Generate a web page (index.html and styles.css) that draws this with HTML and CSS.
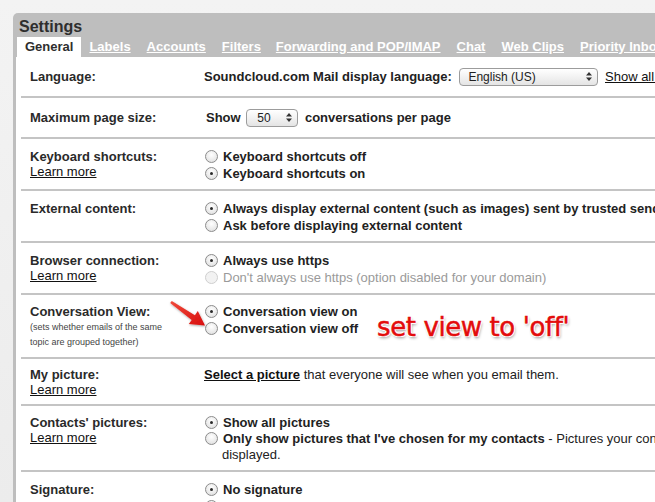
FILE: index.html
```html
<!DOCTYPE html>
<html>
<head>
<meta charset="utf-8">
<link rel="stylesheet" href="styles.css">
</head>
<body>
<div class="panel">
  <div class="panel-head">
    <h1 class="title">Settings</h1>
    <div class="tabs">
      <span class="tab active">General</span>
      <a class="tab">Labels</a>
      <a class="tab">Accounts</a>
      <a class="tab">Filters</a>
      <a class="tab">Forwarding and POP/IMAP</a>
      <a class="tab">Chat</a>
      <a class="tab">Web Clips</a>
      <a class="tab">Priority Inbox</a>
    </div>
  </div>
  <div class="content">
    <div class="row tall">
      <div class="label"><b>Language:</b></div>
      <div class="value"><b>Soundcloud.com Mail display language:</b> <span class="select lang"><span class="sel-text">English (US)</span><svg class="updown" width="6" height="9" viewBox="0 0 6 9"><path d="M3 0 L6 3.5 L0 3.5 Z M3 9 L6 5.5 L0 5.5 Z" fill="#333"/></svg></span> <a class="link">Show all language options</a></div>
    </div>
    <div class="row tall">
      <div class="label"><b>Maximum page size:</b></div>
      <div class="value"><b class="show">Show</b> <span class="select size"><span class="sel-text">50</span><svg class="updown" width="6" height="9" viewBox="0 0 6 9"><path d="M3 0 L6 3.5 L0 3.5 Z M3 9 L6 5.5 L0 5.5 Z" fill="#333"/></svg></span> <b>conversations per page</b></div>
    </div>
    <div class="row two">
      <div class="label"><b>Keyboard shortcuts:</b><div class="more"><a class="link">Learn more</a></div></div>
      <div class="value">
        <div class="opt"><span class="radio"></span><b>Keyboard shortcuts off</b></div>
        <div class="opt"><span class="radio on"></span><b>Keyboard shortcuts on</b></div>
      </div>
    </div>
    <div class="row two">
      <div class="label"><b>External content:</b></div>
      <div class="value">
        <div class="opt"><span class="radio on"></span><b>Always display external content (such as images) sent by trusted senders</b></div>
        <div class="opt"><span class="radio"></span><b>Ask before displaying external content</b></div>
      </div>
    </div>
    <div class="row two">
      <div class="label"><b>Browser connection:</b><div class="more"><a class="link">Learn more</a></div></div>
      <div class="value">
        <div class="opt"><span class="radio on"></span><b>Always use https</b></div>
        <div class="opt disabled"><span class="radio off"></span>Don't always use https (option disabled for your domain)</div>
      </div>
    </div>
    <div class="row conv">
      <div class="label"><b>Conversation View:</b><div class="note">(sets whether emails of the same<br>topic are grouped together)</div></div>
      <div class="value">
        <div class="opt"><span class="radio on"></span><b>Conversation view on</b></div>
        <div class="opt"><span class="radio"></span><b>Conversation view off</b></div>
      </div>
    </div>
    <div class="row pic">
      <div class="label"><b>My picture:</b><div class="more"><a class="link">Learn more</a></div></div>
      <div class="value"><a class="link"><b>Select a picture</b></a> that everyone will see when you email them.</div>
    </div>
    <div class="row three">
      <div class="label"><b>Contacts' pictures:</b><div class="more"><a class="link">Learn more</a></div></div>
      <div class="value">
        <div class="opt"><span class="radio on"></span><b>Show all pictures</b></div>
        <div class="opt"><span class="radio"></span><b>Only show pictures that I've chosen for my contacts</b> - Pictures your contacts choose will not be</div>
        <div class="opt-cont">displayed.</div>
      </div>
    </div>
    <div class="row two">
      <div class="label"><b>Signature:</b></div>
      <div class="value">
        <div class="opt"><span class="radio on"></span><b>No signature</b></div>
        <div class="opt"><span class="radio"></span></div>
      </div>
    </div>
  </div>
</div>
<svg class="arrow" width="655" height="502" viewBox="0 0 655 502">
  <defs>
    <linearGradient id="ag" x1="0" y1="0" x2="1" y2="1">
      <stop offset="0" stop-color="#f04a3a"/>
      <stop offset="1" stop-color="#d80e0e"/>
    </linearGradient>
    <filter id="sh" x="-20%" y="-20%" width="140%" height="140%">
      <feDropShadow dx="0.5" dy="1" stdDeviation="0.8" flood-color="#000" flood-opacity="0.35"/>
    </filter>
  </defs>
  <polygon points="171.8,300.9 194.9,315.2 197.8,311.1 205,325.5 188.8,324.1 191.7,320.0 170.2,303.1" fill="url(#ag)" filter="url(#sh)"/>
</svg>
<div class="annot">set view to 'off'</div>
</body>
</html>
```

FILE: styles.css
```css
html, body {
  margin: 0;
  padding: 0;
}
body {
  width: 655px;
  height: 502px;
  overflow: hidden;
  background: linear-gradient(#f3f3f3, #ececec);
  font-family: "Liberation Sans", Arial, sans-serif;
  font-size: 13px;
  color: #222;
  position: relative;
}
.panel {
  margin: 13px 0 0 13px;
  width: 1100px;
  background: #bebebe;
  border-radius: 5px 0 0 0;
  padding-left: 3px;
  padding-bottom: 20px;
}
.panel-head {
  margin-left: -3px;
}
.title {
  margin: 0;
  padding: 3px 0 0 6px;
  font-size: 16px;
  line-height: 21px;
  font-weight: bold;
  color: #2e2e2e;
}
.tabs {
  display: flex;
  padding-left: 4px;
  height: 20px;
  line-height: 20px;
  white-space: nowrap;
}
.tab {
  padding: 0 8px;
  font-weight: bold;
  color: #fff;
  text-decoration: underline;
}
.tab:nth-child(5) {
  margin-left: -1px;
}
.tab.active {
  background: #fff;
  color: #2e2e2e;
  text-decoration: none;
}
.content {
  background: #fff;
  padding-left: 5px;
}
.row {
  display: grid;
  grid-template-columns: 183px 1fr;
  padding: 9px 0 10px;
  line-height: 16px;
  border-bottom: 2px solid #c4c4c4;
  white-space: nowrap;
}
.row.two {
  line-height: 17px;
  padding: 9px 0 7px;
}
.row.tall {
  line-height: 22px;
  padding: 9px 0 8px;
}
.row.conv {
  line-height: 17px;
  padding: 8px 0 7px;
}
.row.pic {
  padding: 8px 0 8px;
}
.row.three {
  padding: 9px 0 7px;
}
.label {
  padding-left: 9px;
  color: #2a2a2a;
}
.more {
  line-height: 13px;
}
.value {
  color: #222;
}
.link {
  color: #111;
  text-decoration: underline;
}
.note {
  font-size: 9px;
  line-height: 15px;
  color: #444;
}
.select {
  display: inline-flex;
  align-items: center;
  justify-content: space-between;
  box-sizing: border-box;
  height: 18px;
  vertical-align: middle;
  border: 1px solid #9c9c9c;
  border-radius: 4px;
  background: linear-gradient(#ffffff, #f2f2f2 50%, #e4e4e4);
  font-size: 12px;
  font-weight: normal;
  line-height: 16px;
  padding: 0 5px 0 8px;
  margin: 0 3px 0 4px;
  position: relative;
  top: -1px;
}
.select.lang {
  width: 139px;
}
.select.size {
  width: 52px;
  padding-left: 10px;
  margin-left: 2px;
}
.show {
  margin-left: 2px;
}
.updown {
  display: block;
}
.opt {
  display: block;
}
.opt-cont {
  padding-left: 18px;
}
.radio {
  display: inline-block;
  box-sizing: border-box;
  width: 13px;
  height: 13px;
  border: 1px solid #8c8c8c;
  border-radius: 50%;
  background: radial-gradient(circle at 50% 35%, #ffffff, #e6e6e6 70%, #d2d2d2);
  margin: 0 5px 0 1px;
  vertical-align: -2px;
  position: relative;
}
.radio.on::after {
  content: "";
  position: absolute;
  left: 4px;
  top: 4px;
  width: 3px;
  height: 3px;
  border-radius: 50%;
  background: #2a2a2a;
}
.radio.off {
  border-color: #cfcfcf;
  background: #f2f2f2;
}
.opt.disabled {
  color: #9a9a9a;
}
.arrow {
  position: absolute;
  left: 0;
  top: 0;
  pointer-events: none;
}
.annot {
  position: absolute;
  left: 377px;
  top: 312px;
  font-family: "DejaVu Sans", Verdana, sans-serif;
  font-size: 26px;
  line-height: 30px;
  color: #e30c0c;
  white-space: nowrap;
  letter-spacing: -0.4px;
  -webkit-text-stroke: 0.5px #e30c0c;
  text-shadow:
    1px 0 0 #fff, -1px 0 0 #fff, 0 1px 0 #fff, 0 -1px 0 #fff,
    1px 1px 0 #fff, -1px -1px 0 #fff, 1px -1px 0 #fff, -1px 1px 0 #fff,
    1px 2px 3px rgba(0,0,0,0.45);
}
```
